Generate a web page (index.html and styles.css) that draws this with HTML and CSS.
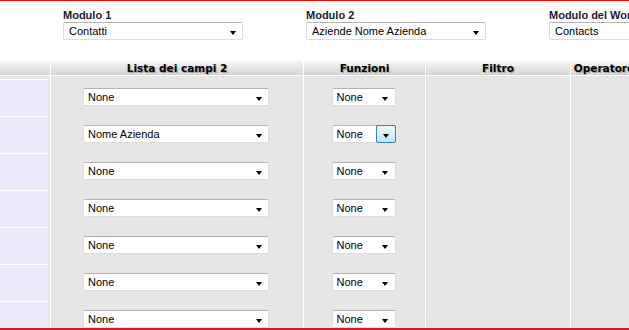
FILE: index.html
```html
<!DOCTYPE html>
<html>
<head>
  <meta charset="utf-8">
  <link rel="stylesheet" href="styles.css">
</head>
<body>
  <div class="page">
    <div class="modules">
      <div class="module">
        <div class="module-label">Modulo 1</div>
        <div class="select wide"><span>Contatti</span><i class="arrow"></i></div>
      </div>
      <div class="module">
        <div class="module-label">Modulo 2</div>
        <div class="select wide"><span>Aziende Nome Azienda</span><i class="arrow"></i></div>
      </div>
      <div class="module">
        <div class="module-label">Modulo del Workflow</div>
        <div class="select wide"><span>Contacts</span><i class="arrow"></i></div>
      </div>
    </div>

    <div class="table">
      <div class="col col-index">
        <div class="col-head"></div>
        <div class="col-body">
          <div class="row"></div>
          <div class="row"></div>
          <div class="row"></div>
          <div class="row"></div>
          <div class="row"></div>
          <div class="row"></div>
          <div class="row"></div>
        </div>
      </div>

      <div class="col col-fields">
        <div class="col-head">Lista dei campi 2</div>
        <div class="col-body">
          <div class="row"><div class="select field"><span>None</span><i class="arrow"></i></div></div>
          <div class="row"><div class="select field"><span>Nome Azienda</span><i class="arrow"></i></div></div>
          <div class="row"><div class="select field"><span>None</span><i class="arrow"></i></div></div>
          <div class="row"><div class="select field"><span>None</span><i class="arrow"></i></div></div>
          <div class="row"><div class="select field"><span>None</span><i class="arrow"></i></div></div>
          <div class="row"><div class="select field"><span>None</span><i class="arrow"></i></div></div>
          <div class="row"><div class="select field"><span>None</span><i class="arrow"></i></div></div>
        </div>
      </div>

      <div class="col col-func">
        <div class="col-head">Funzioni</div>
        <div class="col-body">
          <div class="row"><div class="select small"><span>None</span><i class="arrow"></i></div></div>
          <div class="row"><div class="select small hover"><span>None</span><i class="arrow"></i></div></div>
          <div class="row"><div class="select small"><span>None</span><i class="arrow"></i></div></div>
          <div class="row"><div class="select small"><span>None</span><i class="arrow"></i></div></div>
          <div class="row"><div class="select small"><span>None</span><i class="arrow"></i></div></div>
          <div class="row"><div class="select small"><span>None</span><i class="arrow"></i></div></div>
          <div class="row"><div class="select small"><span>None</span><i class="arrow"></i></div></div>
        </div>
      </div>

      <div class="col col-filter">
        <div class="col-head">Filtro</div>
        <div class="col-body"></div>
      </div>

      <div class="col col-op">
        <div class="col-head">Operatore</div>
        <div class="col-body"></div>
      </div>
    </div>
  </div>
</body>
</html>
```

FILE: styles.css
```css
* {
  margin: 0;
  padding: 0;
  box-sizing: border-box;
}

body {
  width: 629px;
  height: 330px;
  overflow: hidden;
  background: #fff;
  font-family: "Liberation Sans", Arial, sans-serif;
  font-size: 11px;
  color: #000;
}

.page {
  width: 629px;
  height: 330px;
  overflow: hidden;
  display: flex;
  flex-direction: column;
  border-top: 1px solid #ff0000;
  border-bottom: 2px solid #d41e1e;
}

/* module pickers */

.modules {
  height: 60px;
  flex-shrink: 0;
  display: flex;
  gap: 63px;
  padding: 8px 0 0 63px;
}

.module {
  width: 180px;
  flex-shrink: 0;
}

.module-label {
  font-weight: 700;
  font-size: 11px;
  line-height: 13px;
  color: #1b1b33;
  white-space: nowrap;
}

.select {
  position: relative;
  height: 18px;
  background: #fff;
  border: 1px solid #dcdcdc;
  border-top-color: #b4b4b4;
  border-radius: 2px;
  display: flex;
  align-items: center;
  padding-left: 4px;
  padding-bottom: 1px;
  line-height: 14px;
  white-space: nowrap;
}

.select span {
  flex: 1;
  overflow: hidden;
}

.select.wide {
  width: 180px;
  padding-left: 5px;
}

.select.field {
  width: 186px;
}

.select.small {
  width: 64px;
}

.arrow {
  width: 19px;
  height: 100%;
  flex-shrink: 0;
  display: flex;
  justify-content: center;
  align-items: center;
  padding-top: 4px;
}

.arrow::after {
  content: '';
  border-left: 3.5px solid transparent;
  border-right: 3.5px solid transparent;
  border-top: 4px solid #000;
}

.select.hover .arrow {
  height: 18px;
  margin: -1px -1px -2px 0;
  width: 20px;
  border: 1px solid #3c7fb1;
  border-radius: 2px;
  background: linear-gradient(#eaf6fd, #bee6fd);
}

/* mapping table */

.table {
  flex: 1;
  display: flex;
  gap: 1px;
  background: #fff;
  min-height: 0;
}

.col {
  flex-shrink: 0;
  display: flex;
  flex-direction: column;
}

.col-index { width: 50px; }
.col-fields { width: 252px; }
.col-func { width: 121px; }
.col-filter { width: 144px; }
.col-op { width: 66px; }

.col-head {
  height: 15px;
  flex-shrink: 0;
  border-bottom: 1px solid #fff;
  background: linear-gradient(#f6f6f6, #d4d4d4);
  font-family: "DejaVu Sans", Verdana, sans-serif;
  font-weight: 700;
  font-size: 10.5px;
  line-height: 14px;
  text-align: center;
  white-space: nowrap;
  color: #000;
  text-shadow: 1px 1px 1px rgba(0, 0, 0, 0.3);
}

.col-body {
  flex: 1;
  background: #e6e6e6;
  padding-top: 3px;
}

.row {
  height: 37px;
  display: flex;
  justify-content: center;
  align-items: flex-start;
  padding: 9px 2px 0 0;
}

.col-index .row {
  padding: 0;
  margin-right: 2px;
  border-top: 1px solid #fff;
  background: #e8ebf9;
}
```
